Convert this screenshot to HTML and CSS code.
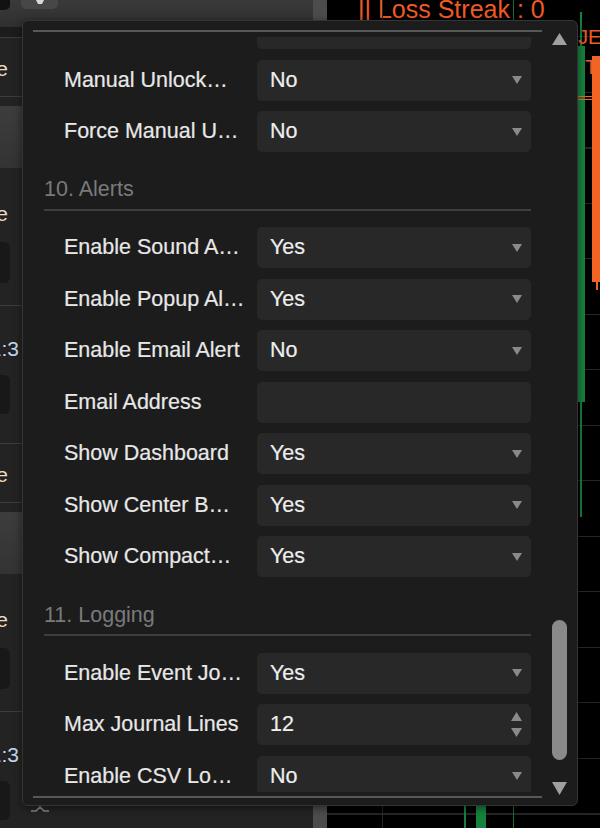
FILE: index.html
```html
<!DOCTYPE html>
<html lang="en">
<head>
<meta charset="utf-8">
<title>Settings</title>
<link rel="stylesheet" href="styles.css">
</head>
<body>
<div class="app">
  <aside class="side">
    <div class="side-main">
      <div class="side-top">
        <div class="tb-dark"></div>
        <div class="tb-btn"><svg width="8" height="5" viewBox="0 0 8 5"><path d="M0 0H8L6 4H2Z" fill="#d8d8d8"/></svg></div>
      </div>
      <div class="side-dark"></div>
      <div class="group">
        <div class="sep"></div>
        <div class="peek-row r1"><div class="peek p-e"><span class="warm">Mode</span></div></div>
        <div class="sep"></div>
        <div class="light"></div>
        <div class="peek-row r2"><div class="peek p-e"><span class="warm">Trade</span></div></div>
        <div class="dbox"></div>
        <div class="sep s2"></div>
        <div class="peek-row r3"><div class="peek p-n"><span class="cool">1:3</span></div></div>
        <div class="drow"><div class="dbox2"></div><svg class="chev" width="20" height="8" viewBox="0 0 20 8"><path d="M1 6H6L10 2L14 6H19" fill="none" stroke="#8a8a8a" stroke-width="1.6"/></svg></div>
      </div>
      <div class="group">
        <div class="sep"></div>
        <div class="peek-row r1"><div class="peek p-e"><span class="warm">Mode</span></div></div>
        <div class="sep"></div>
        <div class="light"></div>
        <div class="peek-row r2"><div class="peek p-e"><span class="warm">Trade</span></div></div>
        <div class="dbox"></div>
        <div class="sep s2"></div>
        <div class="peek-row r3"><div class="peek p-n"><span class="cool">1:3</span></div></div>
        <div class="drow"><div class="dbox2"></div><svg class="chev" width="20" height="8" viewBox="0 0 20 8"><path d="M1 6H6L10 2L14 6H19" fill="none" stroke="#8a8a8a" stroke-width="1.6"/></svg></div>
      </div>
    </div>
    <div class="side-scroll"></div>
  </aside>

  <main class="chart">
    <div class="streak">|| Loss Streak : 0</div>
    <div class="vline v1"></div>
    <div class="vline v2"></div>
    <div class="wick green gw1"></div>
    <div class="body green gb1"></div>
    <div class="wick green gw2"></div>
    <div class="body green gb2"></div>
    <div class="tag t1">JE</div>
    <div class="tag t2">Tr</div>
    <div class="body orange ob1"></div>
    <div class="wick orange ow1"></div>
    <div class="hl h1"></div>
    <div class="hl h2"></div>
  </main>
</div>

<div class="popup">
  <div class="frame">
    <div class="viewport">
      <div class="content">
        <div class="row"><span class="lbl"></span><div class="field"></div></div>
        <div class="row"><span class="lbl">Manual Unlock…</span><div class="field"><span>No</span><svg class="dd" width="10" height="8" viewBox="0 0 10 8"><path d="M0 0H10L5 8Z"/></svg></div></div>
        <div class="row"><span class="lbl">Force Manual U…</span><div class="field"><span>No</span><svg class="dd" width="10" height="8" viewBox="0 0 10 8"><path d="M0 0H10L5 8Z"/></svg></div></div>

        <div class="sec">10. Alerts</div>
        <div class="row"><span class="lbl">Enable Sound A…</span><div class="field"><span>Yes</span><svg class="dd" width="10" height="8" viewBox="0 0 10 8"><path d="M0 0H10L5 8Z"/></svg></div></div>
        <div class="row"><span class="lbl">Enable Popup Al…</span><div class="field"><span>Yes</span><svg class="dd" width="10" height="8" viewBox="0 0 10 8"><path d="M0 0H10L5 8Z"/></svg></div></div>
        <div class="row"><span class="lbl">Enable Email Alert</span><div class="field"><span>No</span><svg class="dd" width="10" height="8" viewBox="0 0 10 8"><path d="M0 0H10L5 8Z"/></svg></div></div>
        <div class="row"><span class="lbl">Email Address</span><div class="field"><span></span></div></div>
        <div class="row"><span class="lbl">Show Dashboard</span><div class="field"><span>Yes</span><svg class="dd" width="10" height="8" viewBox="0 0 10 8"><path d="M0 0H10L5 8Z"/></svg></div></div>
        <div class="row"><span class="lbl">Show Center B…</span><div class="field"><span>Yes</span><svg class="dd" width="10" height="8" viewBox="0 0 10 8"><path d="M0 0H10L5 8Z"/></svg></div></div>
        <div class="row"><span class="lbl">Show Compact…</span><div class="field"><span>Yes</span><svg class="dd" width="10" height="8" viewBox="0 0 10 8"><path d="M0 0H10L5 8Z"/></svg></div></div>

        <div class="sec">11. Logging</div>
        <div class="row"><span class="lbl">Enable Event Jo…</span><div class="field"><span>Yes</span><svg class="dd" width="10" height="8" viewBox="0 0 10 8"><path d="M0 0H10L5 8Z"/></svg></div></div>
        <div class="row"><span class="lbl">Max Journal Lines</span><div class="field"><span>12</span><svg class="spin" width="11" height="26" viewBox="0 0 11 26"><path d="M5.5 0L11 9H0Z"/><path d="M0 16H11L5.5 25Z"/></svg></div></div>
        <div class="row"><span class="lbl">Enable CSV Lo…</span><div class="field"><span>No</span><svg class="dd" width="10" height="8" viewBox="0 0 10 8"><path d="M0 0H10L5 8Z"/></svg></div></div>
      </div>
    </div>
  </div>
  <div class="sb">
    <svg class="sb-up" width="15" height="12" viewBox="0 0 15 12"><path d="M7.5 0L15 12H0Z"/></svg>
    <div class="sb-track"><div class="thumb"></div></div>
    <svg class="sb-down" width="15" height="13" viewBox="0 0 15 13"><path d="M0 0H15L7.5 13Z"/></svg>
  </div>
</div>
</body>
</html>
```

FILE: styles.css
```css
* { box-sizing: border-box; margin: 0; padding: 0; }
html, body { width: 600px; height: 828px; overflow: hidden; background: #000; }
body { font-family: "Liberation Sans", Arial, sans-serif; position: relative; }

.app { display: flex; width: 600px; height: 828px; }

/* left panel (mostly hidden behind the dialog) */
.side { width: 327px; display: flex; background: #232323; }
.side-main { flex: 1; display: flex; flex-direction: column; overflow: hidden; }
.side-scroll { width: 14px; background: #4c4c4c; }
.side-top { height: 27px; flex-shrink: 0; background: linear-gradient(#3a3a3a, #2f2f2f); display: flex; align-items: flex-start; gap: 11px; }
.tb-dark { width: 10px; height: 10px; background: #121212; border-radius: 0 0 5px 0; }
.tb-btn { width: 37px; height: 9px; background: #474747; border-radius: 0 0 5px 5px; display: flex; justify-content: center; }
.side-dark { height: 10px; flex-shrink: 0; background: #1c1c1c; }
.group { height: 406px; flex-shrink: 0; display: flex; flex-direction: column; }
.sep { height: 1px; flex-shrink: 0; background: #3c3c3c; }
.s2 { margin-top: 22px; }
.light { height: 62px; margin-top: 9px; flex-shrink: 0; background: linear-gradient(#3d3d3d, #333); }
.peek-row { flex-shrink: 0; font-size: 21px; line-height: 24px; }
.r1 { height: 58px; padding-top: 19px; }
.r2 { height: 74px; padding-top: 34px; }
.r3 { height: 69px; padding-top: 31px; }
.peek { display: flex; justify-content: flex-end; overflow: hidden; white-space: nowrap; }
.p-e { width: 8px; }
.p-n { width: 19px; }
.warm { color: #ecdcc4; }
.cool { color: #c8d8ee; }
.dbox { width: 10px; height: 41px; flex-shrink: 0; background: #181818; border-radius: 0 6px 6px 0; }
.drow { height: 39px; flex-shrink: 0; display: flex; align-items: flex-start; }
.dbox2 { width: 10px; height: 39px; background: #181818; border-radius: 0 6px 6px 0; }
.chev { margin: 24px 0 0 20px; }

/* chart */
.chart {
  flex: 1; position: relative; overflow: hidden;
  background: repeating-linear-gradient(to bottom, transparent 0 36.5px, #262626 36.5px 37.5px, transparent 37.5px 55.5px), #000;
}
.streak { margin: -3px 0 0 31px; font-size: 25px; line-height: 25px; color: #f05a24; white-space: nowrap; }
.vline { position: absolute; top: 0; bottom: 0; width: 1px; background: #262626; }
.v1 { left: 55px; }
.v2 { left: 186px; background: #1d6b35; }
.wick, .body, .hl { position: absolute; }
.green { background: #17813d; }
.orange { background: #f26424; }
.gw1 { left: 253px; top: 12px; width: 2px; height: 505px; }
.gb1 { left: 250px; top: 46px; width: 8px; height: 356px; }
.gw2 { left: 137px; top: 640px; width: 2px; height: 188px; }
.gb2 { left: 149px; top: 660px; width: 10px; height: 168px; }
.ob1 { left: 265px; top: 56px; width: 10px; height: 226px; }
.ow1 { left: 269px; top: 282px; width: 2px; height: 8px; }
.hl { left: 251px; width: 30px; height: 1px; background: #f26424; }
.h1 { top: 96px; }
.h2 { top: 99px; }
.tag { position: absolute; font-size: 20px; line-height: 20px; color: #f05a24; }
.t1 { left: 251px; top: 27px; }
.t2 { left: 258px; top: 57px; }

/* dialog */
.popup {
  position: absolute; left: 22px; top: 20px; width: 556px; height: 786px;
  background: #1c1c1c; border: 1px solid #343434; border-radius: 6px;
  display: flex; padding: 9px 10px 7px 10px;
  box-shadow: 0 2px 8px rgba(0, 0, 0, .5);
}
.frame { width: 509px; flex-shrink: 0; border-top: 2px solid #575757; border-bottom: 2px solid #575757; display: flex; flex-direction: column; }
.viewport { flex: 1; margin: 5px 0 4px; overflow: hidden; }
.content { margin-top: -29px; padding: 0 11px; }
.row { display: grid; grid-template-columns: 181px 1fr; column-gap: 12px; padding-left: 20px; height: 41px; margin-bottom: 10.5px; }
.lbl { font-size: 21.5px; line-height: 41px; color: #e8e8e8; white-space: nowrap; overflow: hidden; -webkit-text-stroke: 0.2px #e8e8e8; }
.field { background: #282828; border-radius: 5px; display: flex; align-items: center; justify-content: space-between; padding: 0 9px 0 13px; font-size: 21.5px; color: #eeeeee; -webkit-text-stroke: 0.2px #eeeeee; }
.dd path, .spin path { fill: #8a8a8a; }
.sec { padding: 14.7px 0 7.5px; border-bottom: 2px solid #3e3e3e; margin-bottom: 16.8px; font-size: 21.5px; line-height: 24px; color: #7a7a7a; }

.sb { width: 15px; margin-left: 10px; display: flex; flex-direction: column; }
.sb-up { margin-top: 3px; flex-shrink: 0; }
.sb-up path, .sb-down path { fill: #a0a0a0; }
.sb-track { flex: 1; display: flex; flex-direction: column; justify-content: flex-end; padding-bottom: 22px; }
.thumb { width: 15px; height: 140px; background: #8a8a8a; border-radius: 7.5px; }
.sb-down { margin-bottom: 3px; flex-shrink: 0; }
```
